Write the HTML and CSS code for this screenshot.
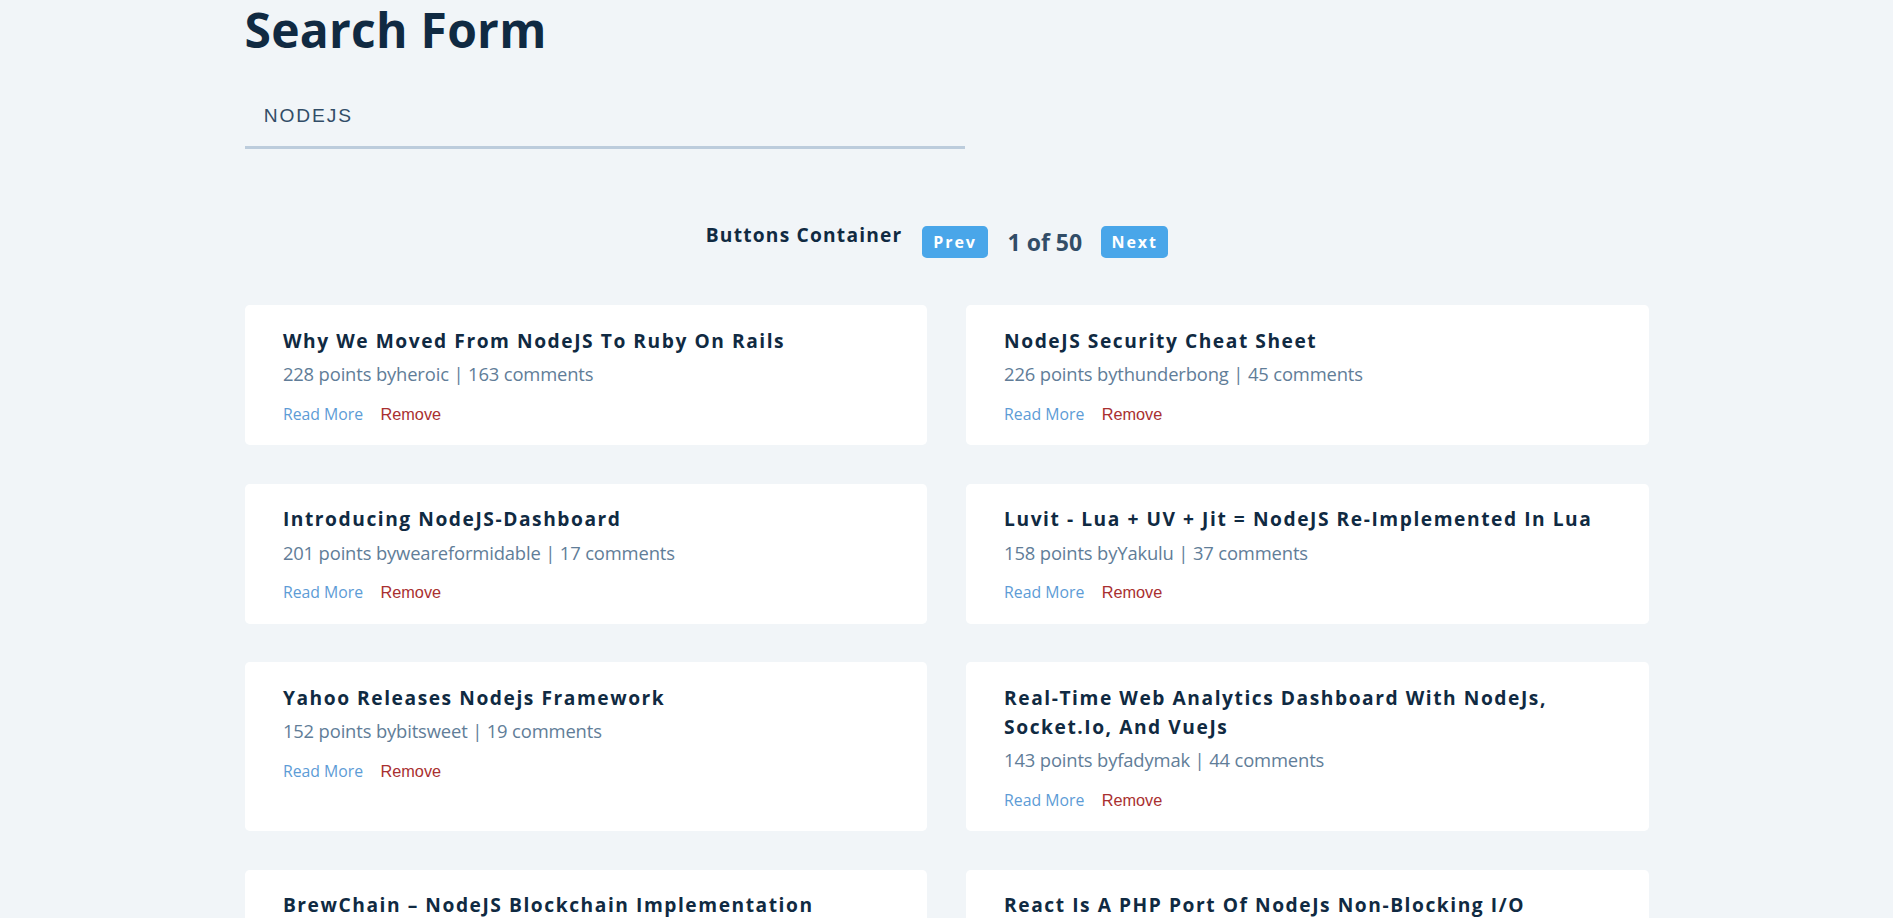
FILE: index.html
```html
<!DOCTYPE html>
<html lang="en">
<head>
<meta charset="utf-8">
<title>Hacker News Search</title>
<link rel="stylesheet" href="styles.css">
</head>
<body>
<form class="search-form">
  <h2 class="page-title">Search Form</h2>
  <input class="form-input" type="text" value="nodejs">
</form>
<div class="btn-container">
  <h4 class="btn-label">Buttons Container</h4>
  <button class="page-btn" type="button">prev</button>
  <p class="page-count">1 of 50</p>
  <button class="page-btn" type="button">next</button>
</div>
<section class="stories">
  <article class="story">
    <h4 class="title">Why We Moved From NodeJS To Ruby On Rails</h4>
    <p class="info">228 points by<span>heroic</span> | 163 comments</p>
    <div class="actions"><a class="read-link" href="#">read more</a><button class="remove-btn" type="button">remove</button></div>
  </article>
  <article class="story">
    <h4 class="title">NodeJS Security Cheat Sheet</h4>
    <p class="info">226 points by<span>thunderbong</span> | 45 comments</p>
    <div class="actions"><a class="read-link" href="#">read more</a><button class="remove-btn" type="button">remove</button></div>
  </article>
  <article class="story">
    <h4 class="title">Introducing NodeJS-Dashboard</h4>
    <p class="info">201 points by<span>weareformidable</span> | 17 comments</p>
    <div class="actions"><a class="read-link" href="#">read more</a><button class="remove-btn" type="button">remove</button></div>
  </article>
  <article class="story">
    <h4 class="title">Luvit - Lua + UV + Jit = NodeJS Re-Implemented In Lua</h4>
    <p class="info">158 points by<span>Yakulu</span> | 37 comments</p>
    <div class="actions"><a class="read-link" href="#">read more</a><button class="remove-btn" type="button">remove</button></div>
  </article>
  <article class="story">
    <h4 class="title">Yahoo Releases Nodejs Framework</h4>
    <p class="info">152 points by<span>bitsweet</span> | 19 comments</p>
    <div class="actions"><a class="read-link" href="#">read more</a><button class="remove-btn" type="button">remove</button></div>
  </article>
  <article class="story">
    <h4 class="title">Real-Time Web Analytics Dashboard With NodeJs, Socket.Io, And VueJs</h4>
    <p class="info">143 points by<span>fadymak</span> | 44 comments</p>
    <div class="actions"><a class="read-link" href="#">read more</a><button class="remove-btn" type="button">remove</button></div>
  </article>
  <article class="story">
    <h4 class="title">BrewChain – NodeJS Blockchain Implementation</h4>
    <p class="info">139 points by<span>bobwaycott</span> | 27 comments</p>
    <div class="actions"><a class="read-link" href="#">read more</a><button class="remove-btn" type="button">remove</button></div>
  </article>
  <article class="story">
    <h4 class="title">React Is A PHP Port Of NodeJs Non-Blocking I/O</h4>
    <p class="info">131 points by<span>jsnell</span> | 52 comments</p>
    <div class="actions"><a class="read-link" href="#">read more</a><button class="remove-btn" type="button">remove</button></div>
  </article>
</section>
</body>
</html>
```
FILE: styles.css
```css
* { box-sizing: border-box; }

body {
  margin: 0;
  background: #f1f5f8;
  color: #102a42;
  font-family: "Open Sans", "Noto Sans", sans-serif;
  font-size: 19.2px;
  line-height: 1.5;
}

.search-form {
  width: 1404px;
  margin: 0 auto;
}

.page-title {
  margin: 0;
  font-size: 48px;
  line-height: 60px;
  font-weight: 700;
  letter-spacing: 0.25px;
  color: #102a42;
}

.form-input {
  display: block;
  width: 720px;
  margin: 25.6px 0 0;
  padding: 19.2px;
  border: none;
  border-bottom: 3.6px solid #bcccdc;
  background: transparent;
  font-family: "Liberation Sans", Arial, sans-serif;
  font-size: 19.2px;
  line-height: 22px;
  color: #324d67;
  text-transform: uppercase;
  letter-spacing: 1.92px;
  outline: none;
}

.btn-container {
  width: 1404px;
  margin: 57.6px auto 27.5px;
  display: flex;
  justify-content: center;
  align-items: center;
}

.btn-label {
  margin: 0 0 14.4px;
  font-size: 19.2px;
  line-height: 24px;
  font-weight: 700;
  letter-spacing: 1.2px;
  color: #102a42;
}

.page-btn {
  margin: 19.2px;
  height: 32.7px;
  width: 66.7px;
  padding: 0;
  border: none;
  border-radius: 4.8px;
  background: #49a6e9;
  color: #fff;
  font-family: "Open Sans", sans-serif;
  font-size: 16px;
  font-weight: 700;
  letter-spacing: 1.92px;
  text-transform: capitalize;
  cursor: pointer;
}

.page-count {
  margin: 0;
  font-size: 23px;
  line-height: 30px;
  font-weight: 700;
  color: #324d67;
}

.stories {
  width: 1404px;
  margin: 0 auto 96px;
  display: grid;
  grid-template-columns: 1fr 1fr;
  gap: 38.4px;
}

.story {
  background: #fff;
  border-radius: 4.8px;
  padding: 21.6px 38.4px 16.8px;
}

.title {
  margin: 0 0 4.8px;
  font-size: 19.2px;
  line-height: 28.8px;
  font-weight: 700;
  letter-spacing: 1.55px;
  color: #102a42;
  text-transform: capitalize;
}

.info {
  margin: 0 0 9.6px;
  color: #617d98;
  font-size: 18.4px;
  letter-spacing: -0.15px;
  line-height: 28.8px;
}

.actions {
  line-height: 28.8px;
}

.read-link {
  font-size: 15.8px;
  margin-right: 14.4px;
  color: #5d9cd6;
  text-decoration: none;
  text-transform: capitalize;
}

.remove-btn {
  padding: 1px 3px;
  background: transparent;
  border: none;
  color: #a93030;
  font-family: "Liberation Sans", Arial, sans-serif;
  font-size: 16.3px;
  text-transform: capitalize;
  cursor: pointer;
}
```
